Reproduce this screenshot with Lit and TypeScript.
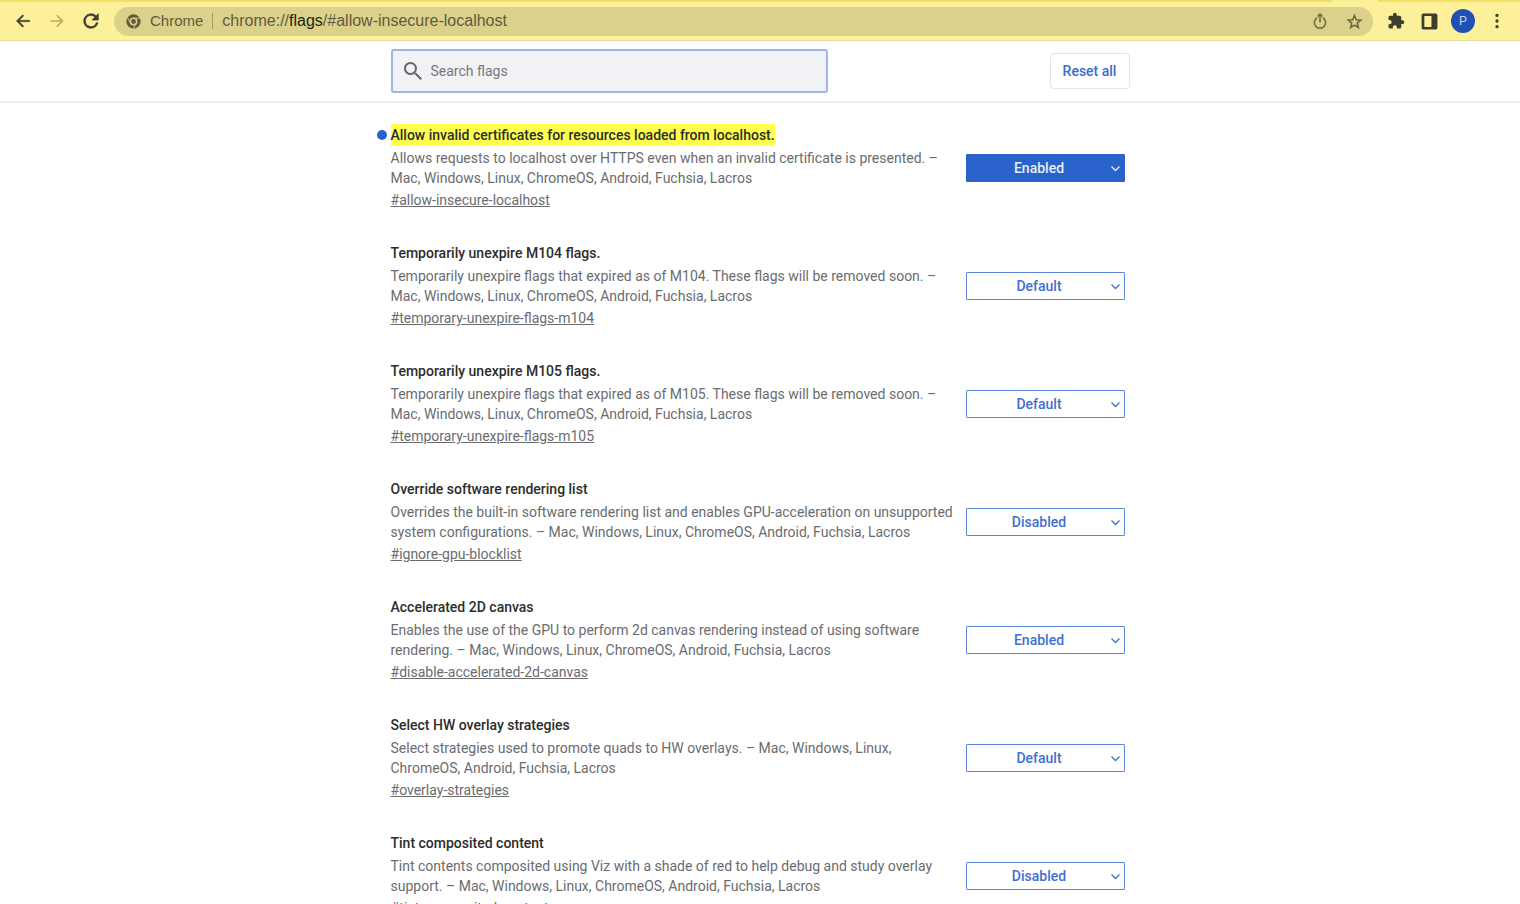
import { LitElement, html, css, svg } from "lit";
import { customElement, property } from "lit/decorators.js";
import { classMap } from "lit/directives/class-map.js";

interface Flag {
  id: string;
  title: string;
  text: string;
  value: "Default" | "Enabled" | "Disabled";
  changed?: boolean;
}

const PLATFORMS = "Mac, Windows, Linux, ChromeOS, Android, Fuchsia, Lacros";

const FLAGS: Flag[] = [
  {
    id: "allow-insecure-localhost",
    title: "Allow invalid certificates for resources loaded from localhost.",
    text: "Allows requests to localhost over HTTPS even when an invalid certificate is presented.",
    value: "Enabled",
    changed: true,
  },
  {
    id: "temporary-unexpire-flags-m104",
    title: "Temporarily unexpire M104 flags.",
    text: "Temporarily unexpire flags that expired as of M104. These flags will be removed soon.",
    value: "Default",
  },
  {
    id: "temporary-unexpire-flags-m105",
    title: "Temporarily unexpire M105 flags.",
    text: "Temporarily unexpire flags that expired as of M105. These flags will be removed soon.",
    value: "Default",
  },
  {
    id: "ignore-gpu-blocklist",
    title: "Override software rendering list",
    text: "Overrides the built-in software rendering list and enables GPU-acceleration on unsupported system configurations.",
    value: "Disabled",
  },
  {
    id: "disable-accelerated-2d-canvas",
    title: "Accelerated 2D canvas",
    text: "Enables the use of the GPU to perform 2d canvas rendering instead of using software rendering.",
    value: "Enabled",
  },
  {
    id: "overlay-strategies",
    title: "Select HW overlay strategies",
    text: "Select strategies used to promote quads to HW overlays.",
    value: "Default",
  },
  {
    id: "tint-composited-content",
    title: "Tint composited content",
    text: "Tint contents composited using Viz with a shade of red to help debug and study overlay support.",
    value: "Disabled",
  },
];

@customElement("browser-toolbar")
export class BrowserToolbar extends LitElement {
  static styles = css`
    :host {
      display: block;
      font-family: "Liberation Sans", Arial, sans-serif;
    }
    .strip {
      display: flex;
      height: 2px;
      background: #f0df63;
    }
    .tab {
      width: 46px;
      margin-left: auto;
      margin-right: 142px;
      background: #fdf09b;
    }
    .bar {
      display: flex;
      align-items: center;
      gap: 12px;
      height: 39px;
      padding: 0 12px;
      background: #fdf09b;
      border-bottom: 1px solid #e6dc9c;
      box-sizing: border-box;
    }
    button {
      display: flex;
      align-items: center;
      justify-content: center;
      width: 22px;
      height: 22px;
      padding: 0;
      border: 0;
      background: none;
      color: #3f3e2c;
      flex: none;
    }
    .dim {
      color: #b9ae62;
    }
    svg {
      display: block;
      fill: currentColor;
    }
    .address {
      display: flex;
      align-items: center;
      flex: 1;
      min-width: 0;
      height: 29px;
      padding: 0 8px 0 11px;
      border-radius: 15px;
      background: #dbd18a;
      color: #5f5b3e;
      line-height: 20px;
    }
    .site {
      padding: 0 9px 0 8px;
      border-right: 1px solid #a39b62;
      font-size: 15px;
      line-height: 16px;
    }
    .url {
      flex: 1;
      padding-left: 9px;
      font-size: 16px;
      white-space: nowrap;
      overflow: hidden;
    }
    .path {
      color: #1f1e12;
    }
    .actions {
      display: flex;
      gap: 12px;
    }
    .actions button {
      color: #6b6741;
    }
    .tools .avatar {
      width: 24px;
      height: 24px;
      border-radius: 50%;
      background: #1f50b5;
      color: #c3d0e6;
      font-size: 12px;
      font-family: inherit;
    }
    .nav {
      display: flex;
      gap: 12px;
    }
    .tools {
      display: flex;
      align-items: center;
      gap: 11px;
    }
  `;

  private icon(paths: unknown, size = 20) {
    return html`<svg width=${size} height=${size} viewBox="0 0 24 24" aria-hidden="true">${paths}</svg>`;
  }

  render() {
    return html`
      <div class="strip"><div class="tab"></div></div>
      <div class="bar">
        <nav class="nav">
          <button aria-label="Back">
            ${this.icon(svg`<path d="M20 11H7.800l5.200-5.200L11.600 4.400l-7.600 7.600 7.600 7.600 1.400-1.400L7.800 13H20z" stroke="currentColor" stroke-width=".4"/>`)}
          </button>
          <button class="dim" aria-label="Forward">
            ${this.icon(svg`<path d="M4 11h12.200l-5.200-5.200 1.400-1.400L20 12l-7.600 7.600-1.400-1.400 5.200-5.200H4z"/>`)}
          </button>
          <button aria-label="Reload">
            ${this.icon(svg`<path d="M17.650 6.350A8 8 0 1 0 19.730 14h-2.080A6 6 0 1 1 12 6c1.660 0 3.140.69 4.220 1.780L13 11h7V4z" stroke="currentColor" stroke-width=".7"/>`, 22)}
          </button>
        </nav>
        <div class="address">
          ${this.icon(
            svg`<g fill="none" stroke="currentColor"><circle cx="12" cy="12" r="7.800" stroke-width="4.600"/></g><g fill="none" stroke="#dbd18a" stroke-width="1.300"><path d="M12 7.300h9.500M16 14.400l-4.700 8.200M8 14.400L3.300 6.200"/></g><circle cx="12" cy="12" r="3.400"/>`,
            17,
          )}
          <span class="site">Chrome</span>
          <span class="url">chrome://<span class="path">flags</span>/#allow-insecure-localhost</span>
          <div class="actions">
            <button aria-label="Share">
              ${this.icon(
                svg`<g fill="none" stroke="currentColor" stroke-width="2"><path d="M8.500 7.500a7.500 7.500 0 1 0 7 0"/><path d="M12 14V3M8.800 6L12 2.800 15.200 6"/></g>`,
                18,
              )}
            </button>
            <button aria-label="Bookmark">
              ${this.icon(
                svg`<path fill="none" stroke="currentColor" stroke-width="2.200" d="M12 3.500l2.500 6 6.300.5-4.800 4.200 1.500 6.300-5.500-3.400-5.500 3.400L8 14.200 3.200 10l6.300-.5z"/>`,
                17,
              )}
            </button>
          </div>
        </div>
        <div class="tools">
          <button aria-label="Extensions">
            ${this.icon(
              svg`<path d="M20.500 11H19V7a2 2 0 0 0-2-2h-4V3.500a2.500 2.500 0 0 0-5 0V5H4a2 2 0 0 0-2 2v3.800h1.500a2.700 2.700 0 0 1 0 5.400H2V20c0 1.100.9 2 2 2h3.800v-1.500a2.700 2.700 0 0 1 5.400 0V22H17a2 2 0 0 0 2-2v-4h1.500a2.500 2.500 0 0 0 0-5z"/>`,
              18,
            )}
          </button>
          <button aria-label="Side panel">
            ${this.icon(svg`<path fill-rule="evenodd" d="M4 2h16a2 2 0 0 1 2 2v16a2 2 0 0 1-2 2H4a2 2 0 0 1-2-2V4a2 2 0 0 1 2-2zm1.500 3v14h9V5z"/>`, 19)}
          </button>
          <button class="avatar" aria-label="Profile">P</button>
          <button aria-label="Menu">
            ${this.icon(svg`<circle cx="12" cy="4.500" r="2.200"/><circle cx="12" cy="12" r="2.200"/><circle cx="12" cy="19.500" r="2.200"/>`, 18)}
          </button>
        </div>
      </div>
    `;
  }
}

@customElement("flag-item")
export class FlagItem extends LitElement {
  @property({ attribute: false }) flag!: Flag;

  static styles = css`
    :host {
      display: flex;
      align-items: flex-start;
      justify-content: space-between;
      gap: 10px;
      padding-bottom: 32px;
    }
    .info {
      position: relative;
      flex: 1;
      font-size: 14px;
      line-height: 20px;
      color: #6a6c6f;
    }
    h2 {
      margin: 0 0 2px;
      font-size: 14px;
      line-height: 22px;
      font-weight: 500;
      color: #2c2d2b;
    }
    .changed h2 span {
      display: inline-block;
      background: #ffff4d;
      color: #2c2d2b;
    }
    .changed::before {
      content: "";
      position: absolute;
      left: -14px;
      top: 6px;
      width: 10px;
      height: 10px;
      border-radius: 50%;
      background: #2a62cc;
    }
    p {
      margin: 0 0 2px;
    }
    a {
      display: inline-block;
      color: inherit;
      text-decoration: underline;
    }
    .pick {
      position: relative;
      flex: none;
      margin-top: 30px;
      color: #3f6fd0;
    }
    select {
      appearance: none;
      display: block;
      box-sizing: border-box;
      width: 159px;
      height: 28px;
      padding: 0 20px 0 8px;
      border: 1px solid #5b86dc;
      border-radius: 1px;
      background: #fff;
      color: inherit;
      font: 500 14px/20px Roboto, sans-serif;
      text-align: center;
      text-align-last: center;
    }
    .chevron {
      position: absolute;
      right: 4px;
      top: 9px;
      width: 11px;
      height: 11px;
      fill: none;
      stroke: currentColor;
      pointer-events: none;
    }
    .pick.on {
      color: #e6edfa;
    }
    .on select {
      background: #2a62cc;
      border-color: #2a62cc;
    }
  `;

  render() {
    const f = this.flag;
    return html`
      <div class=${classMap({ info: true, changed: !!f.changed })}>
        <h2><span id="title">${f.title}</span></h2>
        <p>${f.text} – ${PLATFORMS}</p>
        <a href="#${f.id}">#${f.id}</a>
      </div>
      <div class=${classMap({ pick: true, on: !!f.changed })}>
        <select aria-labelledby="title">
          ${["Default", "Enabled", "Disabled"].map((o) => html`<option ?selected=${o === f.value}>${o}</option>`)}
        </select>
        <svg class="chevron" viewBox="0 0 11 11" aria-hidden="true"><path d="M1.500 3.500l4 4 4-4" stroke-width="1.300" /></svg>
      </div>
    `;
  }
}

@customElement("app-root")
export class AppRoot extends LitElement {
  static styles = css`
    :host {
      display: flex;
      flex-direction: column;
      height: 100vh;
      overflow: hidden;
      background: #fff;
      font-family: Roboto, sans-serif;
    }
    header {
      flex: none;
      border-bottom: 2px solid #ececee;
      padding: 8px 16px;
    }
    .row {
      display: flex;
      align-items: center;
      justify-content: space-between;
      max-width: 739px;
      margin: 0 auto;
    }
    .search {
      display: flex;
      align-items: center;
      gap: 6px;
      box-sizing: border-box;
      width: 437px;
      height: 44px;
      padding: 0 8px;
      border: 2px solid #9db6e8;
      border-radius: 3px;
      background: #f1f2f5;
      color: #66676a;
    }
    .search svg {
      flex: none;
      fill: currentColor;
    }
    input {
      flex: 1;
      min-width: 0;
      padding: 0;
      border: 0;
      outline: 0;
      background: none;
      font: 14px/20px Roboto, sans-serif;
      color: #55565a;
    }
    input::placeholder {
      color: #77787c;
      opacity: 1;
    }
    .reset {
      box-sizing: border-box;
      width: 80px;
      height: 36px;
      padding: 0;
      border: 1px solid #e3e4e7;
      border-radius: 4px;
      background: #fff;
      color: #3b6bcd;
      font: 500 14px/20px Roboto, sans-serif;
    }
    main {
      flex: 1;
      min-height: 0;
      overflow: hidden;
      padding: 21px 16px 0;
    }
    .list {
      max-width: 739px;
      margin: 0 auto;
      padding-right: 5px;
      box-sizing: border-box;
    }
  `;

  render() {
    return html`
      <browser-toolbar></browser-toolbar>
      <header>
        <div class="row">
          <label class="search">
            <svg width="24" height="24" viewBox="0 0 24 24" aria-hidden="true">
              <path
                d="M15.500 14h-.8l-.3-.3A6.500 6.500 0 1 0 13.700 14.400l.3.300v.8l5.500 5.500 1.500-1.500zm-6 0a4.500 4.500 0 1 1 0-9 4.500 4.500 0 0 1 0 9z"
              />
            </svg>
            <input type="text" placeholder="Search flags" aria-label="Search flags" />
          </label>
          <button class="reset">Reset all</button>
        </div>
      </header>
      <main>
        <div class="list">${FLAGS.map((f) => html`<flag-item .flag=${f}></flag-item>`)}</div>
      </main>
    `;
  }
}
